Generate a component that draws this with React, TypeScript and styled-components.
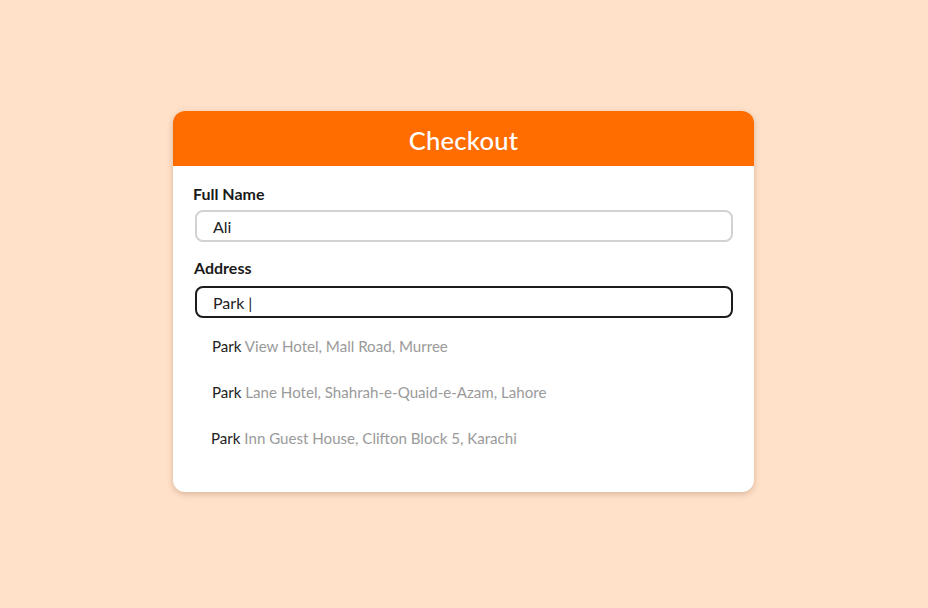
import React from "react";
import styled, { createGlobalStyle } from "styled-components";

const Global = createGlobalStyle`
  html, body { margin: 0; padding: 0; }
  body {
    background: #ffe1c9;
    font-family: Lato, "Open Sans", "Liberation Sans", sans-serif;
    width: 928px;
    height: 608px;
    overflow: hidden;
  }
`;

const Page = styled.div`
  width: 928px;
  height: 608px;
  display: flex;
  justify-content: center;
  align-items: flex-start;
  padding: 111px 1px 0 0;
  box-sizing: border-box;
`;

const Card = styled.div`
  width: 581px;
  height: 381px;
  background: #fff;
  border-radius: 12px;
  box-shadow: 0 2px 6px rgba(120, 70, 30, 0.28);
  overflow: hidden;
  display: flex;
  flex-direction: column;
`;

const Header = styled.div`
  height: 55px;
  background: #ff6d00;
  color: #fff;
  display: flex;
  align-items: center;
  justify-content: center;
  font-size: 25.6px;
  font-weight: 500;
  letter-spacing: 0.2px;
  padding-top: 2px;
  box-sizing: border-box;
`;

const Body = styled.div`
  padding: 18px 21px 0 21px;
  display: flex;
  flex-direction: column;
`;

const Label = styled.label<{ $mt?: number }>`
  font-size: 16px;
  font-weight: 700;
  color: #1a1a1a;
  line-height: 20px;
  margin-top: ${(p) => p.$mt ?? 0}px;
  margin-bottom: ${(p) => (p.$mt ? 8 : 6)}px;
  margin-left: ${(p) => (p.$mt ? 0 : -1)}px;
`;

const Field = styled.div<{ $active?: boolean }>`
  height: 32px;
  box-sizing: border-box;
  border: 2px solid ${(p) => (p.$active ? "#1c1c1c" : "#d2d2d2")};
  border-radius: 8px;
  display: flex;
  align-items: center;
  padding-left: 16px;
  font-size: 16px;
  color: #222;
  margin-left: 1px;
`;

const List = styled.div`
  display: flex;
  flex-direction: column;
  margin-top: 5px;
`;

const Item = styled.div<{ $shift?: number }>`
  height: 46px;
  display: flex;
  align-items: center;
  padding-left: ${(p) => 18 + (p.$shift ?? 0)}px;
  font-size: 15.1px;
  color: #9a9a9a;
  white-space: pre;
`;

const Match = styled.span`
  color: #222;
`;

const suggestions = [
  { rest: " View Hotel, Mall Road, Murree", shift: 0 },
  { rest: " Lane Hotel, Shahrah-e-Quaid-e-Azam, Lahore", shift: 0 },
  { rest: " Inn Guest House, Clifton Block 5, Karachi", shift: -1 },
];

export default function App() {
  return (
    <>
      <Global />
      <Page>
        <Card>
          <Header>Checkout</Header>
          <Body>
            <Label>Full Name</Label>
            <Field>Ali</Field>
            <Label $mt={16}>Address</Label>
            <Field $active>Park |</Field>
            <List>
              {suggestions.map((s, i) => (
                <Item key={i} $shift={s.shift}>
                  <Match>Park</Match>
                  {s.rest}
                </Item>
              ))}
            </List>
          </Body>
        </Card>
      </Page>
    </>
  );
}
